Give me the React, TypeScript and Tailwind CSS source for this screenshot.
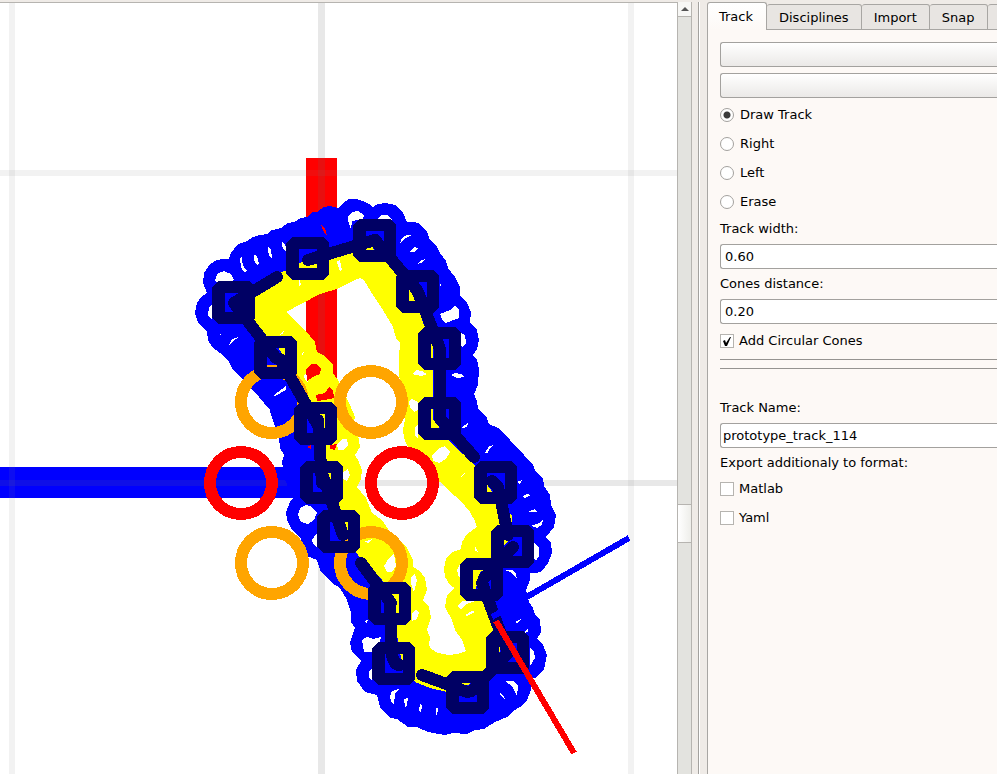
import type { ReactNode } from "react";

type Point = [number, number];

const controlPoints: Point[] = [
  [234, 303], [308, 259], [375, 241], [418, 292], [440, 349], [440, 419],
  [496, 483], [513, 547], [482, 580], [508, 653], [468, 693], [394, 664],
  [390, 604], [339, 532], [322, 483], [316, 424], [276, 358],
];

const innerEdge =
  "M286,312 L303,303 320,294 337,289 353,281 360,278 364,280 373,295 383,310 393,327 396,338 400,343 399,358 399,375 403,400 405,420 403,430 404,438 407,445 420,466 440,482 450,492 460,500 470,512 475,521 477,527 467,534 462,542 461,549 452,552 446,559 444,568 445,577 450,585 455,588 447,595 445,607 452,620 455,630 462,640 466,651 457,654 448,655 438,653 431,649 429,645 430,637 427,630 431,617 429,607 423,600 427,590 425,578 420,571 413,567 413,560 407,548 400,541 390,532 382,520 372,513 366,498 357,487 361,479 362,470 358,460 355,455 360,447 358,435 353,427 355,417 350,405 338,380 333,373 333,365 325,356 317,352 315,342 305,330 293,319 Z";

const blueEdge =
  "M195,313 L197,303 201,297 207,293 203,283 204,273 210,264 217,260 223,259 229,259 231,253 238,244 247,241 253,237 260,235 267,234 272,230 277,229 281,228 288,223 294,222 301,218 307,217 313,212 317,212 324,207 330,206 338,208 343,203 349,199 356,199 363,201 369,204 373,207 378,204 385,203 395,205 403,213 407,222 413,222 418,223 427,231 429,238 437,247 440,253 446,261 448,268 455,277 460,287 460,296 467,303 471,312 470,323 477,330 479,340 477,349 473,355 477,360 479,369 478,385 474,394 477,401 478,408 487,418 489,424 498,428 507,436 513,444 523,453 526,458 533,465 536,472 543,478 544,486 550,495 551,505 556,515 554,527 546,537 551,543 552,553 548,563 542,571 536,573 530,573 530,580 526,590 529,602 533,608 535,615 540,620 541,632 537,639 543,645 547,655 544,670 535,678 530,679 531,690 527,700 522,706 513,711 507,717 495,722 484,729 475,730 467,734 453,733 445,735 428,732 417,727 408,727 397,719 390,718 380,707 377,695 365,692 357,681 356,670 361,661 352,652 350,642 355,628 351,622 351,612 347,600 340,588 332,583 320,570 317,560 307,556 305,550 300,537 292,530 287,520 286,512 290,502 293,498 285,480 283,467 282,462 284,455 280,448 279,438 271,415 270,410 259,397 250,387 242,378 233,370 229,362 220,353 212,347 208,340 207,332 198,323 Z";

const yellowEdge =
  "M240,305 L256,293 280,273 287,270 308,259 328,258 353,252 365,239 373,248 385,262 397,272 408,283 415,301 420,313 423,323 433,345 433,419 450,442 475,465 485,482 494,494 499,503 512,515 512,530 509,540 503,546 493,566 480,572 476,588 483,603 494,623 503,645 499,653 488,665 468,685 455,693 447,692 430,688 415,682 402,662 398,642 396,627 396,613 392,595 382,580 360,558 348,540 340,523 337,507 331,490 325,473 321,460 321,432 318,415 307,400 297,377 279,349 262,332 255,323 Z";

const openings = [
  "M215,280 L218,273 224,271 231,274 234,280 229,282 216,282 Z",
  "M240,258 L242,257 242,262 245,269 248,271 244,272 241,267 Z",
  "M254,255 L257,256 259,264 257,265 254,260 Z",
  "M268,247 L271,249 272,258 270,257 268,252 Z",
  "M282,242 L285,244 287,252 284,250 282,246 Z",
  "M348,217 L352,212 358,211 364,215 363,219 352,221 351,229 348,221 Z",
  "M377,219 L381,215 388,215 392,220 Z",
  "M400,243 L402,238 407,235 412,235 404,239 Z",
  "M409,252 L414,247 418,248 414,252 Z",
  "M417,264 L422,260 426,259 421,263 Z",
  "M440,285 L441,283 441,287 Z",
  "M440,314 L450,310 455,306 459,310 459,318 446,323 443,321 Z",
  "M461,333 L465,335 466,343 463,347 461,346 Z",
  "M451,375 L455,373 461,374 464,377 457,378 Z",
  "M412,374 L416,370 422,371 427,374 421,376 Z",
  "M409,401 L412,399 418,402 418,410 414,412 410,408 Z",
  "M461,428 L468,423 467,427 462,428 Z",
  "M432,455 L439,448 445,446 450,452 446,459 439,463 433,461 Z",
  "M485,453 L489,446 494,445 489,449 488,453 Z",
  "M461,477 L464,473 465,474 Z",
  "M517,482 L522,480 520,484 Z",
  "M522,497 L527,494 531,495 525,498 Z",
  "M528,512 L535,509 537,512 Z",
  "M531,526 L539,523 543,520 542,525 537,528 Z",
  "M534,543 L539,548 539,556 536,561 534,559 Z",
  "M505,570 L512,570 516,574 517,579 510,572 Z",
  "M475,546 L478,552 475,551 Z",
  "M457,570 L460,564 461,575 459,578 Z",
  "M457,606 L463,601 475,601 467,604 461,609 Z",
  "M465,615 L472,611 475,612 467,616 Z",
  "M515,622 L521,619 517,623 Z",
  "M524,633 L528,628 528,632 Z",
  "M530,648 L534,652 535,658 530,666 Z",
  "M505,681 L513,681 518,686 517,696 512,686 Z",
  "M500,693 L504,696 505,699 501,696 Z",
  "M362,640 L367,637 373,639 381,637 379,647 371,652 364,652 Z",
  "M369,671 L372,669 372,681 369,678 Z",
  "M390,696 L392,691 399,689 395,694 394,704 391,702 Z",
  "M404,699 L408,698 407,705 405,707 Z",
  "M420,704 L422,706 421,713 419,711 Z",
  "M436,708 L438,708 437,716 436,715 Z",
  "M298,515 L300,508 306,505 312,507 317,513 314,520 308,524 301,522 Z",
  "M312,540 L316,534 318,535 317,547 313,544 Z",
  "M364,621 L368,620 367,623 Z",
  "M364,542 L372,539 369,543 Z",
  "M384,566 L389,558 394,554 396,566 392,572 387,572 Z",
  "M411,577 L415,574 417,580 414,592 411,584 Z",
  "M412,614 L416,609 419,613 417,619 412,621 Z",
  "M229,345 L232,339 239,337 233,341 Z",
  "M220,334 L221,334 221,336 Z",
  "M209,308 L212,304 212,320 208,315 Z",
  "M272,397 L278,392 286,386 286,390 277,395 Z",
  "M279,335 L284,331 283,334 Z",
  "M301,354 L304,351 303,355 Z",
  "M304,375 L309,372 308,382 305,380 Z",
  "M337,444 L342,439 347,439 348,445 344,450 338,450 Z",
  "M342,473 L348,469 350,475 347,481 343,479 Z",
  "M415,427 L418,424 418,439 415,436 Z",
  "M337,261 L340,260 342,270 340,271 338,266 Z",
  "M299,279 L301,284 300,287 299,284 Z",
];

const redGlimpses = [
  "M306,369 L312,364 317,364 321,369 320,374 313,377 307,381 Z",
  "M316,395 L325,393 329,387 333,390 334,398 325,400 317,401 Z",
  "M321,225 L325,228 327,236 324,232 Z",
  "M330,445 L337,444 335,450 330,449 Z",
  "M307,447 L311,445 311,449 Z",
];

const rings: { c: Point; color: string }[] = [
  { c: [272, 402], color: "#ffa500" },
  { c: [371, 402], color: "#ffa500" },
  { c: [272, 563], color: "#ffa500" },
  { c: [371, 563], color: "#ffa500" },
  { c: [241, 483], color: "#ff0000" },
  { c: [402, 483], color: "#ff0000" },
];

function TrackCanvas() {
  return (
    <svg width="1400" height="1200" className="block shrink-0" shapeRendering="crispEdges" role="img" aria-label="Track drawing">
      <rect x="306" y="155" width="31" height="295" fill="#ff0000" />
      <rect x="0" y="464" width="300" height="31" fill="#0000ff" />
      <g transform="translate(0 -3)">
        <g fill="#646464" fillOpacity="0.15">
          <rect x="318" y="0" width="7" height="1200" />
          <rect x="0" y="480" width="1400" height="6" />
        </g>
        <g fill="#808080" fillOpacity="0.1">
          <rect x="9" y="0" width="6" height="1200" />
          <rect x="628" y="0" width="6" height="1200" />
          <rect x="0" y="170" width="1400" height="6" />
        </g>
        <path d={`${blueEdge} ${innerEdge}`} fill="#0000ff" fillRule="evenodd" />
        <path d={`${yellowEdge} ${innerEdge}`} fill="#ffff00" fillRule="evenodd" />
        {openings.map((d) => <path key={d} d={d} fill="#ffffff" />)}
        {redGlimpses.map((d) => <path key={d} d={d} fill="#ff0000" />)}
        {rings.map(({ c, color }) => (
          <circle key={c.join()} cx={c[0]} cy={c[1]} r="31" fill="none" stroke={color} strokeWidth="12" />
        ))}
        <g fill="none" stroke="#000064" strokeWidth="12" strokeLinecap="round" strokeLinejoin="round">
          <path d="M277,277 L234,303 276,358 M280,359 L316,422 M318,420 L322,483 M323,476 L343,535" />
          <path d="M361,563 L391,603 M390,604 L392,655 Q394,665 400,665" />
          <path d="M422,675 L460,689 Q468,694 473,690 L508,653 482,583" />
          <path d="M484,578 L513,547 M508,535 L498,487 492,481 M474,457 L440,419 V349 L418,292 M421,300 L417,290 375,240 308,260" />
        </g>
        {controlPoints.map(([x, y]) => (
          <path
            key={`${x},${y}`}
            transform={`translate(${x} ${y})`}
            d="M-16,-22 H15 L21,-16 V15 L15,21 H-16 L-22,15 V-16 Z M-9,-10 V9 H9 V-10 Z"
            fill="#000064"
            fillRule="evenodd"
          />
        ))}
        <path d="M492,617 L629,538" stroke="#0000ff" strokeWidth="6" />
        <path d="M496,621 L574,753" stroke="#ff0000" strokeWidth="6" />
      </g>
    </svg>
  );
}

function ScrollBar() {
  return (
    <div className="flex w-[15px] shrink-0 flex-col border-x border-[#b6b4b0] bg-[#e3e3df]">
      <button aria-label="Scroll up" className="flex h-[15px] shrink-0 items-center justify-center border-b border-[#b6b4b0] bg-[#f7f7f5]">
        <svg width="8" height="4" viewBox="0 0 8 4"><path d="M0,4 L4,0 8,4 Z" fill="#555555" /></svg>
      </button>
      <div className="flex-[487]" />
      <button aria-label="Scroll position" className="h-[39px] shrink-0 border-y border-[#b6b4b0] bg-linear-to-r from-white to-[#eeeeea]" />
      <div className="flex-[231]" />
    </div>
  );
}

function Radio({ label, checked = false }: { label: string; checked?: boolean }) {
  return (
    <label className="mb-[2px] flex h-[21px] items-center gap-[6px]">
      <input
        type="radio"
        name="mode"
        defaultChecked={checked}
        className="size-[14px] appearance-none rounded-full border border-[#a3a19e] bg-white checked:bg-[radial-gradient(circle,#3c3c3c_3px,#ffffff_4px)]"
      />
      {label}
    </label>
  );
}

function Check({ label, checked = false }: { label: string; checked?: boolean }) {
  return (
    <label className="mb-[2px] flex h-[21px] items-center gap-[5px]">
      <span className="grid size-[14px]">
        <input type="checkbox" defaultChecked={checked} className="peer col-start-1 row-start-1 size-[14px] appearance-none border border-[#b6b4b0] bg-white" />
        <svg viewBox="0 0 14 14" className="pointer-events-none col-start-1 row-start-1 hidden size-[14px] peer-checked:block">
          <path d="M3,7 L5,6 6,9 10,3 11,3 7,12 5,12 Z" fill="#000000" />
        </svg>
      </span>
      {label}
    </label>
  );
}

function Field({ id, label, value, inset }: { id: string; label: string; value: string; inset: string }) {
  return (
    <div className="flex flex-col gap-[6px]">
      <label htmlFor={id} className="h-[18px] leading-[18px]">{label}</label>
      <input id={id} defaultValue={value} className={`h-[25px] w-full rounded-l-[3px] border border-r-0 border-[#a3a19e] bg-white ${inset}`} />
    </div>
  );
}

function Tab({ children, label }: { children?: ReactNode; label?: string }) {
  return (
    <button
      role="tab"
      aria-label={label}
      className="mt-[2px] h-[26px] shrink-0 rounded-t-[3px] border-t border-r border-b border-[#a8a6a3] bg-[#e8e5e2] px-3 pt-[2px]"
    >
      {children}
    </button>
  );
}

export default function App() {
  return (
    <div className="flex h-screen overflow-hidden bg-[#efebe7] pt-[2px] font-['DejaVu_Sans',sans-serif] text-[13px] leading-[18px] text-black">
      <main className="flex min-w-0 flex-1 overflow-hidden border-t border-[#b6b4b0] bg-white">
        <TrackCanvas />
      </main>
      <ScrollBar />
      <div className="ml-[6px] w-[2px] shrink-0 border-l border-[#a3a19e] bg-white" />
      <aside className="ml-[7px] flex w-[290px] shrink-0 flex-col">
        <div role="tablist" className="flex h-[28px] shrink-0 overflow-hidden">
          <button role="tab" aria-selected="true" className="h-[28px] w-[60px] shrink-0 rounded-t-[3px] border border-b-0 border-[#a8a6a3] bg-linear-to-b from-white to-[#fdf9f6] pr-[2px]">
            Track
          </button>
          <Tab>Disciplines</Tab>
          <Tab>Import</Tab>
          <Tab>Snap</Tab>
          <Tab label="More" />
        </div>
        <section className="flex flex-1 flex-col gap-[6px] border-l border-[#a8a6a3] bg-[#fdf9f6] pt-3 pl-3">
          <button aria-label="First action" className="h-[25px] shrink-0 rounded-l-[3px] border border-r-0 border-[#a3a19e] bg-linear-to-b from-white to-[#ebe9e7]" />
          <button aria-label="Second action" className="h-[25px] shrink-0 rounded-l-[3px] border border-r-0 border-[#a3a19e] bg-linear-to-b from-white to-[#ebe9e7]" />
          <Radio label="Draw Track" checked />
          <Radio label="Right" />
          <Radio label="Left" />
          <Radio label="Erase" />
          <Field id="width" label="Track width:" value="0.60" inset="pl-1" />
          <Field id="distance" label="Cones distance:" value="0.20" inset="pl-1" />
          <Check label="Add Circular Cones" checked />
          <div className="mb-6 h-[10px] shrink-0 border-y border-[#969491]" />
          <Field id="name" label="Track Name:" value="prototype_track_114" inset="pl-[2px]" />
          <p>Export additionaly to format:</p>
          <Check label="Matlab" />
          <Check label="Yaml" />
        </section>
      </aside>
    </div>
  );
}
